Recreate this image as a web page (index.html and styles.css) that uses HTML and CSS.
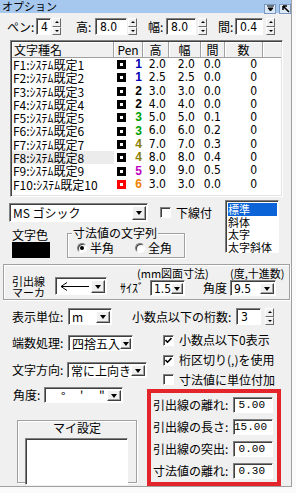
FILE: index.html
```html
<!DOCTYPE html>
<html lang="ja">
<head>
    <meta charset="UTF-8">
    <meta name="viewport" content="width=device-width, initial-scale=1.0">
    <title>オプション</title>
    <link rel="stylesheet" href="styles.css">
</head>
<body>

<div class="window">
    <div class="titlebar">
        <span class="title">オプション</span>
        <span class="tbtn first">
            <svg width="9" height="8" viewBox="0 0 9 8"><path d="M1 1h7M2 3h5L4.5 6z" stroke="#000" fill="#000"/></svg>
        </span>
        <span class="tbtn">
            <svg width="9" height="8" viewBox="0 0 9 8"><path d="M2 1l6 6M2 1v4M2 1h4" stroke="#000" fill="none" stroke-width="1.5"/></svg>
        </span>
    </div>

    <div class="spin-row">
        <div class="sgroup g1"><span class="slabel">ペン:</span><div class="field num w15">4</div><div class="spin"><span class="up"></span><span class="down"></span></div></div>
        <div class="sgroup g2"><span class="slabel">高:</span><div class="field num w32">8.0</div><div class="spin"><span class="up"></span><span class="down"></span></div></div>
        <div class="sgroup g3"><span class="slabel">幅:</span><div class="field num w30">8.0</div><div class="spin"><span class="up"></span><span class="down"></span></div></div>
        <div class="sgroup g4"><span class="slabel">間:</span><div class="field num w28">0.4</div><div class="spin"><span class="up"></span><span class="down"></span></div></div>
    </div>

    <div class="list">
        <div class="list-head">
            <span class="hc left">文字種名</span><span class="hc">Pen</span><span class="hc">高</span><span class="hc">幅</span><span class="hc">間</span><span class="hc">数</span><span class="hc rest"></span>
        </div>
        <div class="row"><span class="name">F1:ｼｽﾃﾑ既定1</span><span class="pencell"><i class="pen"></i><b class="p1">1</b></span><span class="v">2.0</span><span class="v">2.0</span><span class="v">0.0</span><span class="v">0</span></div>
        <div class="row"><span class="name">F2:ｼｽﾃﾑ既定2</span><span class="pencell"><i class="pen"></i><b class="p1">1</b></span><span class="v">2.5</span><span class="v">2.5</span><span class="v">0.0</span><span class="v">0</span></div>
        <div class="row"><span class="name">F3:ｼｽﾃﾑ既定3</span><span class="pencell"><i class="pen"></i><b class="p2">2</b></span><span class="v">3.0</span><span class="v">3.0</span><span class="v">0.0</span><span class="v">0</span></div>
        <div class="row"><span class="name">F4:ｼｽﾃﾑ既定4</span><span class="pencell"><i class="pen"></i><b class="p2">2</b></span><span class="v">4.0</span><span class="v">4.0</span><span class="v">0.0</span><span class="v">0</span></div>
        <div class="row"><span class="name">F5:ｼｽﾃﾑ既定5</span><span class="pencell"><i class="pen"></i><b class="p3">3</b></span><span class="v">5.0</span><span class="v">5.0</span><span class="v">0.1</span><span class="v">0</span></div>
        <div class="row"><span class="name">F6:ｼｽﾃﾑ既定6</span><span class="pencell"><i class="pen"></i><b class="p3">3</b></span><span class="v">6.0</span><span class="v">6.0</span><span class="v">0.2</span><span class="v">0</span></div>
        <div class="row"><span class="name">F7:ｼｽﾃﾑ既定7</span><span class="pencell"><i class="pen"></i><b class="p4">4</b></span><span class="v">7.0</span><span class="v">7.0</span><span class="v">0.3</span><span class="v">0</span></div>
        <div class="row hot"><span class="name">F8:ｼｽﾃﾑ既定8</span><span class="pencell"><i class="pen"></i><b class="p4">4</b></span><span class="v">8.0</span><span class="v">8.0</span><span class="v">0.4</span><span class="v">0</span></div>
        <div class="row"><span class="name">F9:ｼｽﾃﾑ既定9</span><span class="pencell"><i class="pen"></i><b class="p5">5</b></span><span class="v">9.0</span><span class="v">9.0</span><span class="v">0.5</span><span class="v">0</span></div>
        <div class="row"><span class="name">F10:ｼｽﾃﾑ既定10</span><span class="pencell"><i class="pen red"></i><b class="p6">6</b></span><span class="v">3.0</span><span class="v">3.0</span><span class="v">0.0</span><span class="v">0</span></div>
    </div>

    <div class="font-area">
        <div class="fa-left">
            <div class="fa-top">
                <div class="combo c-font"><span class="val">MS ゴシック</span><span class="drop"></span></div>
                <span class="check"></span><span class="clabel">下線付</span>
            </div>
            <div class="fa-bottom">
                <div class="color-block">
                    <div>文字色</div>
                    <div class="swatch"></div>
                </div>
                <div class="group g-width">
                    <span class="legend">寸法値の文字列</span>
                    <div class="radios">
                        <span class="radio on"></span><span class="rlabel">半角</span>
                        <span class="radio second"></span><span class="rlabel">全角</span>
                    </div>
                </div>
            </div>
        </div>
        <div class="stylebox">
            <div class="sel">標準</div>
            <div>斜体</div>
            <div>太字</div>
            <div>太字斜体</div>
        </div>
    </div>

    <div class="group leader">
        <div class="lead-label"><div>引出線</div><div>マーカ</div></div>
        <div class="combo c-arrow">
            <span class="val"><svg width="30" height="9" viewBox="0 0 30 9"><path d="M1 4.5h28M1 4.5l6-4M1 4.5l6 4" stroke="#000" fill="none"/></svg></span><span class="drop"></span>
        </div>
        <div class="sub s-size">
            <div class="note">(mm図面寸法)</div>
            <div class="sub-row"><span class="sub-label">ｻｲｽﾞ</span><div class="combo c-small"><span class="val num">1.5</span><span class="drop"></span></div></div>
        </div>
        <div class="sub s-angle">
            <div class="note">(度,十進数)</div>
            <div class="sub-row"><span class="sub-label">角度</span><div class="combo c-angle"><span class="val num">9.5</span><span class="drop"></span></div></div>
        </div>
    </div>

    <div class="unit-row">
        <span class="flabel">表示単位:</span>
        <div class="combo c-unit"><span class="val">m</span><span class="drop"></span></div>
        <span class="digits-label">小数点以下の桁数:</span>
        <div class="field num w25">3</div>
        <div class="spin gap3"><span class="up"></span><span class="down"></span></div>
    </div>

    <div class="cols">
        <div class="col-left">
            <div class="frow first"><span class="flabel">端数処理:</span><div class="combo c-round"><span class="val">四捨五入</span><span class="drop"></span></div></div>
            <div class="frow"><span class="flabel">文字方向:</span><div class="combo c-dir"><span class="val">常に上向き</span><span class="drop"></span></div></div>
            <div class="frow angle"><span class="alabel">角度:</span><div class="combo c-deg"><span class="val deg"><span>°</span><span>'</span><span>"</span></span><span class="drop"></span></div></div>
            <div class="group mine">
                <span class="legend">マイ設定</span>
                <div class="mine-box"></div>
            </div>
        </div>
        <div class="col-right">
            <div class="crow"><span class="check on"><svg width="7" height="7" viewBox="0 0 7 7"><path d="M0.5 3l2 2.2L6.5 1" stroke="#000" stroke-width="1.6" fill="none"/></svg></span><span class="clabel">小数点以下0表示</span></div>
            <div class="crow"><span class="check on"><svg width="7" height="7" viewBox="0 0 7 7"><path d="M0.5 3l2 2.2L6.5 1" stroke="#000" stroke-width="1.6" fill="none"/></svg></span><span class="clabel">桁区切り(,)を使用</span></div>
            <div class="crow last"><span class="check"></span><span class="clabel">寸法値に単位付加</span></div>
            <div class="redbox">
                <div class="rrow"><span class="rlabel2">引出線の離れ:</span><div class="field mono">5.00</div></div>
                <div class="rrow"><span class="rlabel2">引出線の長さ:</span><div class="field mono">15.00</div></div>
                <div class="rrow"><span class="rlabel2">引出線の突出:</span><div class="field mono">0.00</div></div>
                <div class="rrow"><span class="rlabel2">寸法値の離れ:</span><div class="field mono">0.30</div></div>
            </div>
        </div>
    </div>
</div>

</body>
</html>
```

FILE: styles.css
```css
body {
    margin: 0;
    background-color: #fafafa;
    font-family: "Noto Sans CJK JP", sans-serif;
    font-size: 12px;
    line-height: 14px;
    color: #000;
}
.window {
    width: 291px;
    height: 486px;
    overflow: hidden;
    background-color: #f0f0f0;
    border-right: 1px solid #a0a0a0;
    border-bottom: 1px solid #a0a0a0;
}
.num {
    font-family: "Liberation Sans Narrow", "DejaVu Sans Condensed", "Liberation Sans", sans-serif;
}
.mono {
    font-family: "Liberation Mono", monospace;
}

/* title bar */
.titlebar {
    height: 13px;
    background-color: #a6c8ee;
    display: flex;
    align-items: center;
}
.title {
    font-size: 11px;
    line-height: 13px;
    padding-left: 2px;
}
.tbtn {
    width: 10px;
    height: 8px;
    margin-top: 4px;
    background-color: #dce8f6;
    border: 1px solid #7a98c0;
    display: flex;
    align-items: center;
    justify-content: center;
}
.tbtn.first {
    margin-left: auto;
    margin-right: 3px;
}

/* common controls */
.field {
    height: 17px;
    box-sizing: border-box;
    background-color: #fff;
    border: 1px solid;
    border-color: #808080 #fff #fff #808080;
    box-shadow: inset 1px 1px 0 #404040;
    padding: 1px 0 0 4px;
    line-height: 14px;
}
.w15 { width: 15px; }
.w25 { width: 25px; }
.w28 { width: 28px; }
.w30 { width: 30px; }
.w32 { width: 32px; }
.spin {
    display: flex;
    flex-direction: column;
    width: 9px;
    height: 17px;
    margin-left: 1px;
}
.spin span {
    flex: 1;
    display: flex;
    align-items: center;
    justify-content: center;
    box-sizing: border-box;
    border: 1px solid;
    border-color: #fff #696969 #696969 #fff;
}
.spin .up::after {
    content: "";
    border-left: 2px solid transparent;
    border-right: 2px solid transparent;
    border-bottom: 2px solid #000;
}
.spin .down::after {
    content: "";
    border-left: 2px solid transparent;
    border-right: 2px solid transparent;
    border-top: 2px solid #000;
}
.combo {
    display: flex;
    align-items: center;
    box-sizing: border-box;
    background-color: #fff;
    border: 1px solid;
    border-color: #808080 #fff #fff #808080;
    box-shadow: inset 1px 1px 0 #404040;
    padding: 2px 1px 1px 3px;
}
.combo .val {
    flex: 1;
    white-space: nowrap;
    display: flex;
    align-items: center;
    line-height: 12px;
}
.drop {
    width: 14px;
    align-self: stretch;
    box-sizing: border-box;
    background-color: #f0f0f0;
    border: 1px solid;
    border-color: #fff #404040 #404040 #fff;
    box-shadow: inset -1px -1px 0 #a0a0a0;
    display: flex;
    align-items: center;
    justify-content: center;
}
.drop::after {
    content: "";
    border-left: 3px solid transparent;
    border-right: 3px solid transparent;
    border-top: 4px solid #000;
}
.check {
    width: 11px;
    height: 11px;
    box-sizing: border-box;
    background-color: #fff;
    border: 1px solid;
    border-color: #808080 #fff #fff #808080;
    box-shadow: inset 1px 1px 0 #404040;
    display: inline-flex;
    align-items: center;
    justify-content: center;
    flex-shrink: 0;
}
.clabel {
    margin-left: 5px;
    white-space: nowrap;
}
.radio {
    width: 10px;
    height: 10px;
    box-sizing: border-box;
    border-radius: 50%;
    background-color: #fff;
    border: 1px solid;
    border-color: #808080 #fff #fff #808080;
    box-shadow: inset 1px 1px 0 #404040;
    display: inline-flex;
    align-items: center;
    justify-content: center;
}
.radio.on::after {
    content: "";
    width: 4px;
    height: 4px;
    border-radius: 50%;
    background-color: #000;
}
.group {
    box-sizing: border-box;
    border: 1px solid #a0a0a0;
    box-shadow: 1px 1px 0 #fff, inset 1px 1px 0 #fff;
}
.legend {
    display: inline-block;
    background-color: #f0f0f0;
    padding: 0 1px;
    line-height: 12px;
    white-space: nowrap;
}

/* spinner row */
.spin-row {
    display: flex;
    margin-top: 5px;
    height: 17px;
}
.sgroup {
    display: flex;
    align-items: center;
}
.slabel {
    white-space: nowrap;
}
.g1 { margin-left: 7px; width: 69px; }
.g1 .slabel { width: 29px; }
.g2 { width: 72px; }
.g2 .slabel { width: 19px; }
.g3 { width: 70px; }
.g3 .slabel { width: 18px; }
.g3 .spin { margin-left: 2px; }
.g4 .slabel { width: 17px; }
.g4 .spin { margin-left: 3px; }

/* list */
.list {
    margin: 5px 0 0 10px;
    width: 273px;
    height: 157px;
    box-sizing: border-box;
    background-color: #fff;
    border: 1px solid;
    border-color: #808080 #fff #fff #808080;
    box-shadow: inset 1px 1px 0 #404040, inset -1px -1px 0 #e3e3e3;
    padding: 1px 1px 0 1px;
}
.list-head, .row {
    display: grid;
    grid-template-columns: 102px 29px 26px 32px 24px 38px 1fr;
}
.list-head {
    height: 16px;
}
.hc {
    background-color: #f0f0f0;
    border-right: 1px solid #a0a0a0;
    border-bottom: 1px solid #a0a0a0;
    box-shadow: inset 1px 1px 0 #fff;
    text-align: center;
    line-height: 15px;
}
.hc.left {
    text-align: left;
    padding-left: 2px;
}
.hc.rest {
    border-right: none;
}
.row {
    height: 13.3px;
    line-height: 13px;
}
.name {
    padding-left: 1px;
    white-space: nowrap;
}
.hot .name {
    background-color: #ececec;
}
.pencell {
    display: flex;
    align-items: center;
    justify-content: space-between;
    padding: 0 1px 0 3px;
}
.pen {
    width: 9px;
    height: 9px;
    box-sizing: border-box;
    border: 3px solid #000;
    background-color: #fff;
}
.pen.red {
    border-color: #ff0000;
}
.pencell b {
    font-family: "Liberation Sans", sans-serif;
    font-size: 12px;
}
.p1 { color: #0000b0; }
.p2 { color: #000; }
.p3 { color: #00a000; }
.p4 { color: #8c8000; }
.p5 { color: #c000c0; }
.p6 { color: #f08000; }
.v {
    text-align: right;
    font-family: "Liberation Sans Narrow", "DejaVu Sans Condensed", "Liberation Sans", sans-serif;
}
.row .v:nth-child(3) { padding-right: 3px; }
.row .v:nth-child(4) { padding-right: 6px; }
.row .v:nth-child(5) { padding-right: 4px; }
.row .v:nth-child(6) { padding-right: 6px; }

/* font area */
.font-area {
    display: flex;
    margin-top: 3px;
}
.fa-left {
    width: 225px;
}
.fa-top {
    display: flex;
    align-items: center;
    margin-top: 3px;
}
.c-font {
    width: 139px;
    height: 19px;
    margin-left: 9px;
    margin-right: 12px;
}
.fa-bottom {
    display: flex;
    margin-top: 6px;
}
.color-block {
    margin-left: 12px;
    width: 38px;
}
.swatch {
    height: 16px;
    background-color: #000;
}
.g-width {
    margin: 5px 0 0 17px;
    width: 118px;
    height: 25px;
    padding-left: 4px;
}
.g-width .legend {
    margin-top: -7px;
    display: block;
    width: max-content;
}
.radios {
    display: flex;
    align-items: center;
    margin-top: 2px;
    padding-left: 5px;
}
.rlabel {
    margin-left: 3px;
}
.radio.second {
    margin-left: 21px;
}
.stylebox {
    width: 54px;
    height: 53px;
    box-sizing: border-box;
    background-color: #fff;
    border: 1px solid;
    border-color: #808080 #fff #fff #808080;
    box-shadow: inset 1px 1px 0 #404040;
    padding: 2px 1px 0 2px;
    font-size: 11px;
    line-height: 12.5px;
}
.stylebox .sel {
    background-color: #0a64d8;
    color: #fff;
}

/* leader group */
.leader {
    display: flex;
    margin: 6px 1px 0 3px;
    height: 36px;
    padding-left: 8px;
}
.lead-label {
    margin-top: 11px;
    width: 43px;
    font-size: 11px;
    line-height: 11px;
}
.c-arrow {
    margin-top: 12px;
    width: 52px;
    height: 18px;
    padding-left: 4px;
}
.sub {
    display: flex;
    flex-direction: column;
}
.note {
    margin-top: 3px;
    font-size: 11px;
    line-height: 11px;
    white-space: nowrap;
}
.sub-row {
    display: flex;
    align-items: center;
    margin-top: 1px;
}
.s-size {
    margin-left: 13px;
    width: 83px;
}
.s-size .note {
    margin-left: 17px;
}
.s-size .sub-label {
    width: 30px;
}
.s-angle .note {
    margin-left: 27px;
}
.s-angle .sub-label {
    width: 27px;
}
.c-small {
    width: 35px;
    height: 16px;
}
.c-angle {
    width: 46px;
    height: 16px;
}

/* settings */
.unit-row {
    display: flex;
    align-items: center;
    margin-top: 8px;
    height: 17px;
    padding-left: 12px;
}
.flabel {
    width: 56px;
    white-space: nowrap;
}
.c-unit {
    width: 44px;
    height: 17px;
}
.digits-label {
    margin-left: 20px;
    width: 104px;
    white-space: nowrap;
}
.spin.gap3 {
    margin-left: 4px;
}
.cols {
    display: flex;
}
.col-left {
    width: 147px;
}
.frow {
    display: flex;
    align-items: center;
    padding-left: 12px;
    margin-top: 11px;
}
.frow.first {
    margin-top: 10px;
}
.frow.angle {
    margin-top: 9px;
}
.c-round {
    width: 65px;
    height: 16px;
}
.c-dir {
    width: 80px;
    height: 16px;
}
.alabel {
    width: 31px;
    padding-left: 1px;
}
.c-deg {
    width: 79px;
    height: 16px;
}
.deg span {
    margin-left: 13px;
    width: 6px;
}
.mine {
    margin: 17px 0 0 17px;
    width: 120px;
    height: 63px;
    text-align: center;
}
.mine .legend {
    margin-top: -6px;
}
.mine-box {
    margin: 3px 8px 0 7px;
    height: 45px;
    background-color: #fff;
    border: 1px solid;
    border-color: #808080 #fff #fff #808080;
    box-shadow: inset 1px 1px 0 #404040;
}
.col-right {
    padding-top: 5px;
}
.crow {
    display: flex;
    align-items: center;
    height: 20px;
    padding-left: 16px;
}
.crow.last {
    height: 19px;
}
.redbox {
    width: 134px;
    height: 97px;
    box-sizing: border-box;
    border: 4px solid #e3242b;
    padding: 4px 0 0 2px;
    display: flex;
    flex-direction: column;
    gap: 6px;
}
.rrow {
    display: flex;
    align-items: center;
    height: 16px;
}
.rlabel2 {
    width: 80px;
    white-space: nowrap;
}
.redbox .field {
    width: 40px;
    height: 16px;
    text-align: right;
    padding: 0 7px 0 0;
    font-size: 11px;
}
```
